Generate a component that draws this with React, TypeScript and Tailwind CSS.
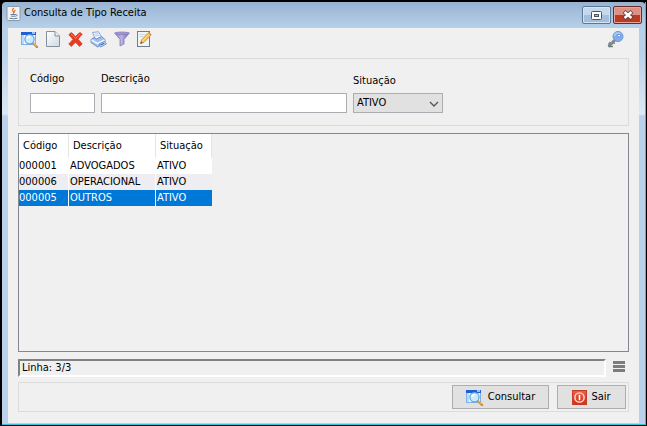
import type { ReactNode } from "react";

const rows = [
  { codigo: "000001", descricao: "ADVOGADOS", situacao: "ATIVO" },
  { codigo: "000006", descricao: "OPERACIONAL", situacao: "ATIVO" },
  { codigo: "000005", descricao: "OUTROS", situacao: "ATIVO" },
];

const rowStyles = [
  "bg-white",
  "bg-[#ededf2]",
  "bg-[#0078d7] text-white",
];

function SearchIcon() {
  return (
    <svg width="18" height="17" viewBox="0 0 18 17">
      <rect x="0.5" y="1.5" width="14" height="12" fill="#f4f9ff" stroke="#7db0ee" />
      <rect x="0" y="1" width="15" height="3" fill="#1c5fd6" />
      <rect x="11" y="1" width="3" height="2" fill="#ffffff" opacity="0.6" />
      <rect x="1" y="4" width="2" height="9" fill="#bcd9fa" />
      <path d="M11.5 11.5 L16 16" stroke="#c98a2b" strokeWidth="2.4" strokeLinecap="round" />
      <path d="M11.8 11.3 L15.8 15.3" stroke="#ffd979" strokeWidth="0.9" />
      <circle cx="8.5" cy="8.3" r="4.6" fill="#c9ecfb" stroke="#6ba3da" strokeWidth="1.3" />
      <path d="M6 8a2.6 2.6 0 0 1 3-2.4" fill="none" stroke="#ffffff" strokeWidth="1.4" />
    </svg>
  );
}

function NewIcon() {
  return (
    <svg width="14" height="16" viewBox="0 0 14 16">
      <defs>
        <linearGradient id="page" x1="0" y1="0" x2="1" y2="1">
          <stop offset="0" stopColor="#ffffff" />
          <stop offset="1" stopColor="#cfd9e2" />
        </linearGradient>
      </defs>
      <path d="M0.5 0.5H9l4.5 4.5v10.5H0.5z" fill="url(#page)" stroke="#85909d" />
      <path d="M9 0.5V5h4.5" fill="#eef2f5" stroke="#85909d" />
    </svg>
  );
}

function DeleteIcon() {
  return (
    <svg width="15" height="15" viewBox="0 0 15 15">
      <path
        d="M0.8 2.8 3.2 0.6Q6 2.5 7.6 4.6 9.5 2 12 0.6L14.2 2.2Q11.8 4.5 10 7.3 12.300 9.500 14.200 12L11.500 14.400Q9.500 12.300 7.500 10.300 5.500 12.300 3.300 14.400L0.800 12Q3 9.500 5 7.400 3 4.800 0.800 2.800z"
        fill="#ea3a20"
        stroke="#d23a24"
        strokeWidth="0.8"
      />
      <path d="M3 2.2Q6 4.200 7.600 6.500 9.500 3.700 12 2" fill="none" stroke="#ff8468" strokeWidth="1" />
    </svg>
  );
}

function PrinterIcon() {
  return (
    <svg width="17" height="17" viewBox="0 0 17 17">
      <path d="M2.500 1.500 8.500 0.700 11.500 6 5.500 8.500z" fill="#f4f9ff" stroke="#7a9fd4" strokeWidth="0.9" />
      <path d="M4.500 3.300 8.500 2.700M5.200 5 9.500 4.200" stroke="#9bbbe5" strokeWidth="0.8" />
      <path d="M1 8.500 4 6.500 6.500 8 11.500 5.500 15 8.500V12L7.500 16 1 11.500z" fill="#9fbeea" stroke="#6389c8" strokeWidth="0.9" />
      <path d="M1.500 9 7.500 12.500 14.500 9" fill="none" stroke="#eef5ff" strokeWidth="1.800" />
      <path d="M9 13 14.500 10.500 16.300 13 10.500 16z" fill="#ffffff" stroke="#5c86c9" strokeWidth="0.9" />
      <path d="M10.500 14 14.500 12.200" stroke="#3f74cc" strokeWidth="1.400" />
    </svg>
  );
}

function FilterIcon() {
  return (
    <svg width="16" height="16" viewBox="0 0 16 16">
      <defs>
        <linearGradient id="funnel" x1="0" x2="1">
          <stop offset="0" stopColor="#8479bd" />
          <stop offset="0.45" stopColor="#bdb6e2" />
          <stop offset="1" stopColor="#7468b0" />
        </linearGradient>
      </defs>
      <path d="M0.800 2 6 8.500V15L10 13V8.500L15.200 2z" fill="url(#funnel)" stroke="#8479bb" strokeWidth="0.8" />
      <ellipse cx="8" cy="2.300" rx="7.300" ry="1.300" fill="#a198d0" stroke="#8479bb" strokeWidth="0.7" />
    </svg>
  );
}

function EditIcon() {
  return (
    <svg width="15" height="16" viewBox="0 0 15 16">
      <rect x="0.5" y="0.5" width="12" height="15" fill="#f0f4f7" stroke="#707c88" />
      <path d="M2.500 3.500h6M2.500 5.500h4" stroke="#ccd5dd" />
      <path d="M3.500 12.500 4.500 9 11.800 1.500 14.200 3.800 7 11.300z" fill="#fbc245" stroke="#c58a2c" strokeWidth="0.8" />
      <path d="M5.500 10 12.500 3" stroke="#ffe9a0" />
      <path d="M11 2.300 12 1.300 14.400 3.600 13.400 4.600z" fill="#e98b55" />
      <path d="M3.300 12.700 4 10.500 5.600 12z" fill="#4b4b4b" />
    </svg>
  );
}

function KeyIcon() {
  return (
    <svg width="17" height="17" viewBox="0 0 17 17">
      <path d="M9 8 1.500 15.500" stroke="#727f80" strokeWidth="2.600" />
      <path d="M3.500 11 1.500 13.500M1.500 15.500H6M5.500 9.500 7.500 13" stroke="#727f80" strokeWidth="1.400" />
      <path d="M9 7.500 2.500 14" stroke="#98a6a6" strokeWidth="0.9" />
      <circle cx="11" cy="5.500" r="5" fill="#82aeee" stroke="#6b93da" />
      <path d="M7.500 5a3.500 3.500 0 0 1 6-2" fill="none" stroke="#b4d2fa" strokeWidth="1.400" />
      <circle cx="12" cy="4.700" r="1.400" fill="#ffffff" stroke="#4a72bd" strokeWidth="0.7" />
    </svg>
  );
}

function PowerIcon() {
  return (
    <svg width="15" height="15" viewBox="0 0 15 15">
      <defs>
        <linearGradient id="power" x1="0" y1="0" x2="0" y2="1">
          <stop offset="0" stopColor="#ec6147" />
          <stop offset="1" stopColor="#d0301a" />
        </linearGradient>
      </defs>
      <rect x="0.5" y="0.5" width="14" height="14" fill="url(#power)" stroke="#c53c27" />
      <circle cx="7.500" cy="7.500" r="4.600" fill="none" stroke="#ffe4da" strokeWidth="1.400" />
      <path d="M7.500 4.800V10.200" stroke="#ffffff" strokeWidth="1.600" />
    </svg>
  );
}

function JavaIcon() {
  return (
    <svg width="15" height="15" viewBox="0 0 14 15">
      <rect x="0.5" y="0.5" width="13" height="14" rx="1" fill="#f3f3f3" stroke="#8d9aa8" />
      <path d="M7.500 2Q5 4 6.700 5.500 7.700 6.500 6.700 8M9 4Q7 5 8.200 6.800" fill="none" stroke="#e6762c" strokeWidth="1.100" />
      <path d="M4 8.500h5.500M4.500 10.200h4.700M3 12.200q4 1.100 8 0M9.700 8.500q2 .3 0 1.900" fill="none" stroke="#52759b" strokeWidth="0.9" />
    </svg>
  );
}

function ToolButton({ label, children }: { label: string; children: ReactNode }) {
  return (
    <button aria-label={label} title={label} className="flex h-5 w-[23px] items-center justify-center">
      {children}
    </button>
  );
}

function TitleBar() {
  return (
    <header className="-ml-0.5 -mr-1 flex h-[26px] items-center pr-px">
      <div className="flex flex-1 items-center gap-[3px] pb-1">
        <JavaIcon />
        <h1 className="leading-4">Consulta de Tipo Receita</h1>
      </div>
      <div className="flex gap-0.5">
        <button
          aria-label="Maximizar"
          className="flex h-[18px] w-[29px] items-center justify-center rounded-xs border border-[#5c7896] bg-linear-to-b from-[#c5d9ed] from-50% to-[#a3bfdc] to-50% shadow-[inset_0_0_0_1px_#d5e4f3]"
        >
          <svg width="11" height="9" viewBox="0 0 11 9">
            <rect x="0.5" y="0.5" width="10" height="8" rx="1" fill="#ffffff" stroke="#4a5566" />
            <rect x="3.5" y="3.5" width="4" height="2" fill="#a3bfdc" stroke="#4a5566" />
          </svg>
        </button>
        <button
          aria-label="Fechar"
          className="flex h-[18px] w-[29px] items-center justify-center rounded-xs border border-[#6b2a2a] bg-linear-to-b from-[#dc9184] from-50% to-[#bd3a22] to-50% shadow-[inset_0_0_0_1px_#e3a89d]"
        >
          <svg width="12" height="10" viewBox="0 0 12 10">
            <path d="M2 1.500 10 8.500M10 1.500 2 8.500" stroke="#5a3a42" strokeWidth="4" />
            <path d="M2.500 2 9.500 8M9.500 2 2.500 8" stroke="#ffffff" strokeWidth="2.400" />
          </svg>
        </button>
      </div>
    </header>
  );
}

function Toolbar() {
  return (
    <div className="flex h-[30px] items-start pt-px">
      <ToolButton label="Consultar registro"><SearchIcon /></ToolButton>
      <ToolButton label="Novo"><NewIcon /></ToolButton>
      <ToolButton label="Excluir"><DeleteIcon /></ToolButton>
      <ToolButton label="Imprimir"><PrinterIcon /></ToolButton>
      <ToolButton label="Filtrar"><FilterIcon /></ToolButton>
      <ToolButton label="Editar"><EditIcon /></ToolButton>
      <div className="ml-auto mr-0.5">
        <ToolButton label="Acesso"><KeyIcon /></ToolButton>
      </div>
    </div>
  );
}

function Filters() {
  return (
    <form className="flex h-[68px] items-end gap-1.5 border border-[#dcdcdc] px-[11px] pb-3">
      <div className="flex flex-col gap-1.5">
        <label htmlFor="codigo" className="leading-4">Código</label>
        <input id="codigo" className="h-5 w-[65px] border border-[#abadb3] bg-white px-1 outline-none" />
      </div>
      <div className="flex w-[246px] flex-col gap-1.5">
        <label htmlFor="descricao" className="leading-4">Descrição</label>
        <input id="descricao" className="h-5 w-full border border-[#abadb3] bg-white px-1 outline-none" />
      </div>
      <div className="flex flex-col gap-1">
        <label htmlFor="situacao" className="leading-4">Situação</label>
        <div className="relative">
          <select
            id="situacao"
            className="block h-5 w-[90px] appearance-none border border-[#abadb3] bg-[#e1e1e1] pl-[3px] outline-none"
          >
            <option>ATIVO</option>
            <option>INATIVO</option>
          </select>
          <svg className="pointer-events-none absolute right-1 top-2" width="10" height="7" viewBox="0 0 10 7">
            <path d="M1 1 5 5 9 1" fill="none" stroke="#555555" strokeWidth="1.300" />
          </svg>
        </div>
      </div>
    </form>
  );
}

function Results() {
  return (
    <div className="mt-[7px] flex-1 border border-[#828790]">
      <table className="w-[193px] table-fixed border-separate border-spacing-0 text-left">
        <colgroup>
          <col className="w-[50px]" />
          <col className="w-[87px]" />
          <col className="w-[56px]" />
        </colgroup>
        <thead className="bg-white">
          <tr className="h-6">
            <th className="border-r border-[#e5e5e5] p-0 pl-1 font-normal">Código</th>
            <th className="border-r border-[#e5e5e5] p-0 pl-1 font-normal">Descrição</th>
            <th className="border-r border-[#e5e5e5] p-0 pl-1 font-normal">Situação</th>
          </tr>
        </thead>
        <tbody>
          {rows.map((row, index) => (
            <tr key={row.codigo} className={`h-4 leading-4 ${rowStyles[index]}`}>
              <td className="border-r border-white p-0">{row.codigo}</td>
              <td className="border-r border-white p-0 pl-px">{row.descricao}</td>
              <td className="p-0 pl-px">{row.situacao}</td>
            </tr>
          ))}
        </tbody>
      </table>
    </div>
  );
}

function StatusBar() {
  return (
    <div className="mt-[7px] flex items-start gap-[7px]">
      <p className="h-[18px] flex-1 border-2 border-[#828282] border-r-white border-b-white pl-0.5 leading-[14px]">
        Linha: 3/3
      </p>
      <button aria-label="Menu" className="mr-1 flex w-3 flex-col gap-px pt-0.5">
        <span className="h-[3px] w-full bg-[#7f7b78]" />
        <span className="h-[3px] w-full bg-[#7f7b78]" />
        <span className="h-[3px] w-full bg-[#7f7b78]" />
      </button>
    </div>
  );
}

export default function App() {
  return (
    <div className="flex min-h-screen bg-black font-['DejaVu_Sans_Condensed','DejaVu_Sans',sans-serif] text-[11px] text-black">
      <div className="flex flex-1 flex-col rounded-t-md border-2 border-r border-b border-black bg-[linear-gradient(to_bottom,#98b3d2_0,#b7d0ea_26px,#b9d1ea_50px,#dbe8f5_112px,#b9d1ea_114px)]">
        <div className="flex flex-1 flex-col border-r border-b border-[#35c1dc] px-1.5 pb-px">
          <TitleBar />
          <main className="flex flex-1 flex-col bg-[#f0f0f0] px-2.5 pb-[11px]">
            <Toolbar />
            <Filters />
            <Results />
            <StatusBar />
            <div className="mt-[5px] flex justify-end gap-2 border border-[#dcdcdc] p-0.5">
              <button className="flex h-6 w-[97px] items-center justify-center gap-1 border border-[#adadad] bg-[#e1e1e1]">
                <SearchIcon />
                Consultar
              </button>
              <button className="flex h-6 w-[69px] items-center justify-center gap-1 border border-[#adadad] bg-[#e1e1e1]">
                <PowerIcon />
                Sair
              </button>
            </div>
          </main>
        </div>
      </div>
    </div>
  );
}
